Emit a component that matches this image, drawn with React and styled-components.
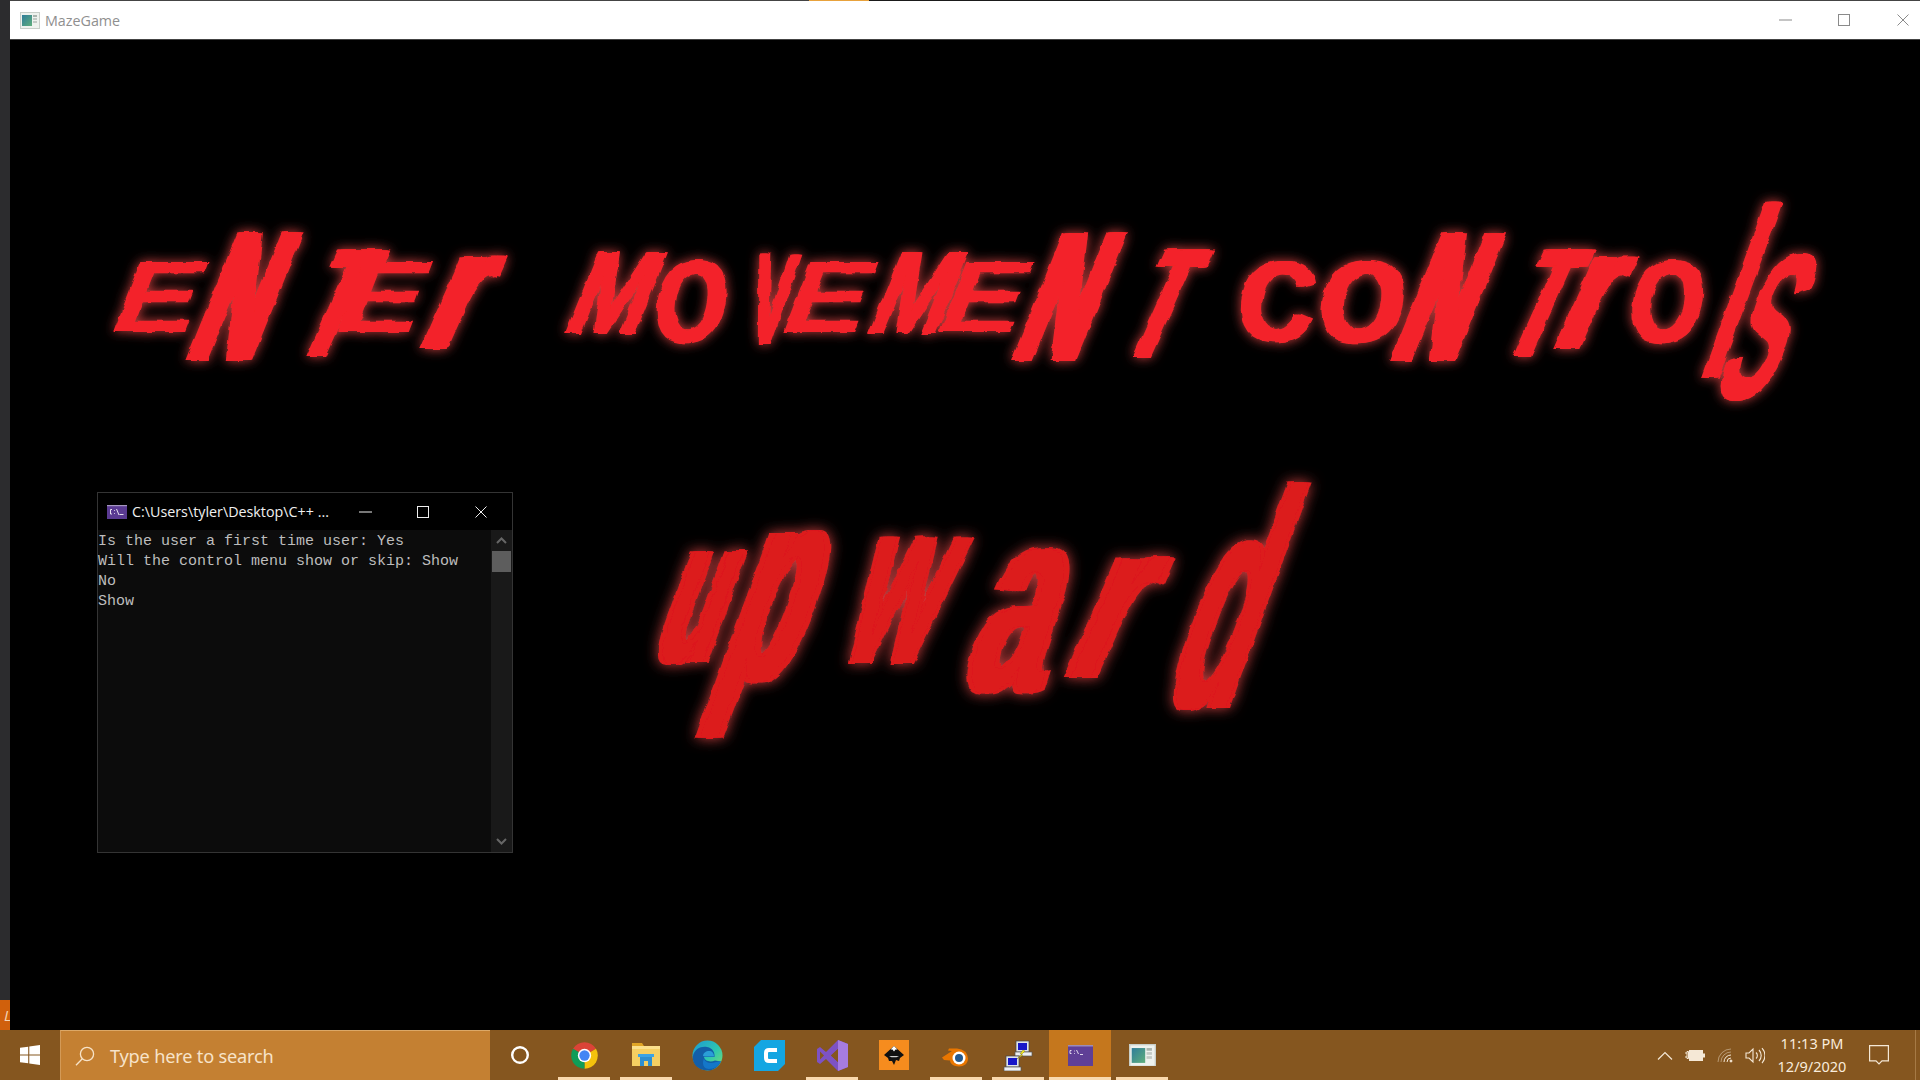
import React from "react";
import styled, { createGlobalStyle } from "styled-components";

const Global = createGlobalStyle`
  html, body { margin: 0; padding: 0; background: #000; overflow: hidden; }
  #root { width: 1920px; height: 1080px; }
`;

const Screen = styled.div`
  width: 1920px; height: 1080px;
  display: grid;
  grid-template-rows: 1030px 50px;
  font-family: "Open Sans", "Noto Sans", sans-serif;
`;
const Upper = styled.div`
  display: grid;
  grid-template-columns: 10px 1fr;
  min-height: 0;
`;
const DesktopEdge = styled.div`
  background: #2c2c2e;
  display: flex;
  flex-direction: column;
  justify-content: flex-end;
`;
const EdgeTab = styled.div`
  height: 30px;
  background: #d0600c;
  color: #f5d5b5;
  font-size: 15px;
  font-style: italic;
  line-height: 30px;
  padding-left: 4px;
  overflow: hidden;
`;
const GameWindow = styled.div`
  display: grid;
  grid-template-rows: 40px 1fr;
  min-width: 0;
`;
const TitleBar = styled.div`
  background: #fff;
  border-top: 1px solid #444;
  border-bottom: 1px solid #444;
  box-sizing: border-box;
  display: flex;
  align-items: center;
  padding-left: 10px;
  position: relative;
`;
const TopAccent = styled.div`
  position: absolute;
  top: -1px;
  left: ${p => p.$x}px;
  width: ${p => p.$w}px;
  height: 1px;
  background: ${p => p.$c};
`;
const TitleText = styled.span`
  margin-left: 5px;
  color: #8f8f8f;
  font-size: 14.3px;
  flex: 1;
`;
const Controls = styled.div`
  display: flex;
  height: 100%;
  margin-right: -12px;
`;
const CtlBtn = styled.div`
  width: 58.5px;
  display: flex;
  align-items: center;
  justify-content: center;
  color: #8a8a8a;
`;
const Canvas = styled.div`
  background: #000;
  position: relative;
  overflow: hidden;
`;

/* Big display lettering */
const Line = styled.div`
  position: absolute;
  left: ${p => p.$x}px;
  top: ${p => p.$y}px;
  display: flex;
  align-items: flex-start;
  color: ${p => p.$c};
  filter: url(#rough) drop-shadow(0 0 ${p => p.$g}px rgba(255, 20, 20, .8));
  font-family: "Liberation Sans", Arial, sans-serif;
  font-weight: 700;
`;
const Cell = styled.div`
  flex: none;
  display: flex;
  align-items: center;
  justify-content: center;
`;
const Glyph = styled.span`
  display: block;
  flex: none;
  white-space: pre;
`;

/* cap top, bottom, ink width (em) of each Liberation Sans Bold letter used */
const M = {
  E: [.716, 0, .46], N: [.716, 0, .48], T: [.716, 0, .47], M: [.716, 0, .58], O: [.73, -.012, .6],
  V: [.716, 0, .56], C: [.73, -.012, .54], S: [.73, -.012, .48], r: [.53, 0, .3], l: [.716, 0, .14],
  u: [.519, -.01, .42], p: [.53, -.21, .44], w: [.519, 0, .66], a: [.53, -.01, .42], d: [.729, -.01, .44],
};

function Letter({ c, ml, mt, w, h, skew, smear }) {
  const [top, bot, ink] = M[c];
  const fs = h / (top - bot);
  const shift = h * Math.tan(skew * Math.PI / 180);
  const body = Math.max(w - shift, 8);
  const sx = body / ((ink + 2 * smear) * fs);
  const dy = ((top + bot) / 2 - .3465) * fs;
  const s = smear * fs;
  const shadow = s ? [s, -s, s / 2, -s / 2].map(v => `${v.toFixed(1)}px 0 0 currentColor`).join(",") : "none";
  return (
    <Cell style={{ width: w, height: h, marginLeft: ml, marginTop: mt }}>
      <Glyph style={{
        fontSize: fs,
        lineHeight: `${fs}px`,
        textShadow: shadow,
        transform: `translateY(${dy.toFixed(1)}px) skewX(${-skew}deg) scaleX(${sx.toFixed(3)})`,
      }}>{c}</Glyph>
    </Cell>
  );
}

function Lettering({ items, y, color, glow, originX }) {
  let right = originX;
  return (
    <Line $x={originX - 10} $y={y - 40} $c={color} $g={glow}>
      {items.map(([c, x, x2, t, b, skew, smear], i) => {
        const ml = x - right;
        right = x2;
        return <Letter key={i} c={c} ml={ml} mt={t - y} w={x2 - x} h={b - t} skew={skew} smear={smear} />;
      })}
    </Line>
  );
}

const heading = [
  ["E", 117, 203, 260, 333, 21, 0],
  ["N", 190, 300, 228, 362, 22, .05],
  ["T", 293, 387, 245, 357, 24, .05],
  ["E", 340, 427, 260, 333, 21, 0],
  ["r", 423, 510, 258, 350, 24, .05],
  ["M", 570, 663, 250, 335, 22, .02],
  ["O", 656, 728, 256, 343, 8, .03],
  ["V", 745, 800, 250, 345, 10, .03],
  ["E", 787, 873, 260, 333, 21, 0],
  ["M", 873, 964, 250, 335, 22, .02],
  ["E", 943, 1029, 260, 333, 21, 0],
  ["N", 1015, 1124, 228, 362, 22, .05],
  ["T", 1120, 1212, 245, 357, 24, .05],
  ["C", 1242, 1313, 258, 343, 6, .03],
  ["O", 1321, 1404, 256, 343, 8, .03],
  ["N", 1394, 1503, 228, 362, 22, .05],
  ["T", 1499, 1592, 245, 357, 24, .05],
  ["r", 1556, 1641, 258, 350, 24, .05],
  ["O", 1631, 1704, 256, 343, 8, .03],
  ["l", 1700, 1781, 203, 377, 20, .05],
  ["S", 1712, 1825, 247, 402, 24, .02],
];
const answer = [
  ["u", 660, 752, 553, 665, 20, .05],
  ["p", 715, 856, 533, 740, 20, .05],
  ["w", 847, 975, 540, 665, 20, .03],
  ["a", 970, 1087, 550, 695, 18, .04],
  ["r", 1067, 1179, 558, 678, 24, .05],
  ["d", 1164, 1309, 482, 712, 20, .03],
];

/* Console window */
const Console = styled.div`
  position: absolute;
  left: 87px;
  top: 452px;
  width: 416px;
  height: 361px;
  box-sizing: border-box;
  border: 1px solid #343434;
  background: #000;
  display: grid;
  grid-template-rows: 37px 1fr;
`;
const ConsoleHead = styled.div`
  display: flex;
  align-items: center;
  padding-left: 9px;
  color: #f0f0f0;
  font-size: 14.3px;
`;
const ConsoleTitle = styled.span`
  margin-left: 5px;
  width: 204px;
  white-space: nowrap;
  flex: none;
`;
const ConsoleCtl = styled.div`
  width: 58px;
  display: flex;
  justify-content: center;
  align-items: center;
  flex: none;
`;
const ConsoleBody = styled.div`
  display: grid;
  grid-template-columns: 1fr 21px;
  min-height: 0;
`;
const Output = styled.pre`
  margin: 0;
  background: #0c0c0c;
  color: #bdbdbd;
  font: 15px/20px "Liberation Mono", monospace;
  padding-top: 2px;
`;
const Scroll = styled.div`
  background: #191919;
  display: grid;
  grid-template-rows: 21px 21px 1fr 21px;
  justify-items: center;
  align-items: center;
`;
const Thumb = styled.div`
  width: 19px;
  height: 21px;
  background: #5d5d5d;
`;

/* Taskbar */
const Taskbar = styled.div`
  background: #85561f;
  display: flex;
  align-items: stretch;
  height: 50px;
`;
const StartBtn = styled.div`
  width: 60px;
  display: flex;
  align-items: center;
  justify-content: center;
`;
const SearchBox = styled.div`
  width: 430px;
  background: #c48032;
  border-top: 1px solid #dca867;
  border-left: 1px solid #d39a57;
  box-sizing: border-box;
  display: flex;
  align-items: center;
  padding-left: 14px;
  color: #f7e3c9;
  font-size: 18.2px;
  font-family: "Noto Sans", sans-serif;
`;
const SearchLabel = styled.span`
  margin-left: 15px;
  letter-spacing: -.2px;
`;
const TaskBtn = styled.div`
  width: ${p => p.$w || 62}px;
  padding-right: ${p => p.$pr || 0}px;
  flex: none;
  box-sizing: border-box;
  display: flex;
  align-items: center;
  justify-content: center;
  position: relative;
  background: ${p => p.$active ? "#c5771d" : "transparent"};
`;
const Under = styled.div`
  position: absolute;
  bottom: 0;
  left: ${p => p.$l ?? 5}px;
  right: ${p => p.$r ?? 5}px;
  height: 3px;
  background: #f9d9ae;
`;
const Tray = styled.div`
  margin-left: auto;
  display: flex;
  align-items: center;
  color: #f5e8d6;
  height: 100%;
`;
const TrayIcon = styled.div`
  width: 30px;
  display: flex;
  align-items: center;
  justify-content: center;
`;
const Clock = styled.div`
  width: 72px;
  margin-left: 6px;
  text-align: center;
  font: 14.5px/23px "Noto Sans", sans-serif;
  color: #f9ecdc;
  white-space: nowrap;
`;
const Notify = styled.div`
  width: 62px;
  margin-right: 5px;
  display: flex;
  align-items: center;
  justify-content: center;
`;
const ShowDesk = styled.div`
  width: 5px;
  height: 100%;
  border-left: 1px solid #a67a45;
  box-sizing: border-box;
`;

const MazeIcon = ({ s = 20 }) => (
  <svg width={s} height={s * .85} viewBox="0 0 20 17">
    <defs>
      <linearGradient id="mz" x1="0" y1="0" x2="1" y2="1">
        <stop offset="0" stopColor="#2f7d9a" />
        <stop offset="1" stopColor="#5fae7c" />
      </linearGradient>
    </defs>
    <rect width="20" height="17" fill="#c8cfc9" />
    <rect x="1" y="1" width="18" height="15" fill="#eef2ee" />
    <rect x="2" y="3" width="10" height="11" fill="url(#mz)" />
    <rect x="13" y="3" width="4" height="2" fill="#aab4ae" />
    <rect x="13" y="6" width="4" height="2" fill="#c3cac5" />
    <rect x="13" y="9" width="4" height="2" fill="#c3cac5" />
  </svg>
);

const CmdIcon = () => (
  <svg width="20" height="14" viewBox="0 0 20 14" style={{ flex: "none" }}>
    <rect width="20" height="14" fill="#5a3a92" />
    <rect width="20" height="1.200" fill="#a596c0" />
    <path d="M5 4.500H3.500v4.500H5M7 5.500h.8M7 8.500h.8M9.500 4l2.500 6M12.500 9.500h4" stroke="#e6e0f0" strokeWidth="1" fill="none" />
  </svg>
);

const WinLogo = () => (
  <svg width="20" height="20" viewBox="0 0 20 20" fill="#fff">
    <path d="M0 2.800 8.200 1.700v7.700H0zM9.300 1.500 20 0v9.400H9.300zM0 10.500h8.200v7.800L0 17.200zM9.300 10.500H20V20L9.300 18.500z" />
  </svg>
);

const SearchGlyph = () => (
  <svg width="20" height="20" viewBox="0 0 20 20" fill="none" stroke="#f7e3c9" strokeWidth="1.300" style={{ flex: "none" }}>
    <circle cx="12" cy="8" r="6.600" />
    <path d="M7.300 12.700 1 19.300" />
  </svg>
);

const Chrome = () => (
  <svg width="29" height="29" viewBox="0 0 48 48">
    <path d="M24 24 4.950 13A22 22 0 0 1 43.050 13z" fill="#db4437" />
    <path d="M24 24 43.050 13A22 22 0 0 1 24 46z" fill="#f4c20d" />
    <path d="M24 24 24 46A22 22 0 0 1 4.950 13z" fill="#0f9d58" />
    <circle cx="24" cy="24" r="11" fill="#fff" />
    <circle cx="24" cy="24" r="8.500" fill="#4285f4" />
  </svg>
);
const Explorer = () => (
  <svg width="28" height="28" viewBox="0 0 28 28">
    <path d="M0 2h10l2 3H0z" fill="#e0a526" />
    <rect y="5" width="28" height="20" fill="#f5cf62" />
    <rect y="5" width="28" height="3" fill="#fbe08c" />
    <path d="M8 15h12v10h-4v-5h-4v5H8z" fill="#2e8fd0" />
    <rect x="6" y="13" width="16" height="3" fill="#3ba4e6" />
  </svg>
);
const Edge = () => (
  <svg width="31" height="31" viewBox="0 0 31 31">
    <defs>
      <linearGradient id="eg" x1="0" y1="0" x2="1" y2="1">
        <stop offset="0" stopColor="#1a98d5" />
        <stop offset=".55" stopColor="#2ec6b0" />
        <stop offset="1" stopColor="#7fe06a" />
      </linearGradient>
    </defs>
    <circle cx="15.500" cy="15.500" r="15" fill="url(#eg)" />
    <path d="M.8 17C2 8 10 6 15 7c6 1 8 6 7.500 10H12c.500 4 6 5.500 11 3.500l6 1C26 28 20 31 15 30.500 6 30 .500 24 .8 17z" fill="#125ea8" />
    <path d="M11 16c0-3 3-5 6-5s5 2 5 5.500H16c-2 0-4 0-5-.500z" fill="#2a9ed8" />
    <path d="M12 18.500c1 4 6 6 12 3.500l5-1c-2 5-7 8-12 8-4 0-6-3-6-6 0-2 .500-3.500 1-4.500z" fill="#1477c9" />
  </svg>
);
const CApp = () => (
  <svg width="31" height="31" viewBox="0 0 31 31">
    <path d="M7 0h24v24l-7 7H0V7z" fill="#14a6e2" />
    <path d="M23 10h-8q-3 0-3 3v5q0 3 3 3h8" stroke="#fff" strokeWidth="4" fill="none" />
  </svg>
);
const VS = () => (
  <svg width="31" height="31" viewBox="0 0 31 31">
    <path d="M21 0l10 4v23l-10 4-12-12-6 5-3-2V9l3-2 6 5zM21 9l-7 6.500 7 6.500zM3 11.500v8l4-4z" fill="#7d52c4" fillRule="evenodd" />
    <path d="M21 0l10 4v23l-10 4z" fill="#a67ce0" />
    <path d="M21 9l-7 6.500 7 6.500z" fill="#85561f" />
  </svg>
);
const Inkscape = () => (
  <svg width="30" height="30" viewBox="0 0 30 30">
    <rect width="30" height="30" fill="#f68c1e" />
    <path d="M15 6 25 15 21 18 20 21 17 20 15 25 13 21 10 21 9 18 5 15z" fill="#111" />
    <path d="M15 6 18.500 9.500 16.500 9.500 15 11.500 13.500 9.500 11.500 9.500z" fill="#fff" />
    <path d="M10 16h10l-2.500 1.300h-5z" fill="#cfcfcf" />
  </svg>
);
const Blender = () => (
  <svg width="28" height="24" viewBox="0 0 28 24">
    <path d="M1 14.500 11 8 7 7.500 8 5.500h8q10 1 11 10c0 5-4 8-9 8-5 0-9-3-9-6L3 17z" fill="#ea7600" />
    <circle cx="18" cy="15" r="6.500" fill="#fff" />
    <circle cx="18" cy="15" r="4" fill="#24598f" />
  </svg>
);
const NetIcon = () => (
  <svg width="30" height="31" viewBox="0 0 30 31">
    <rect x="13" y="1" width="13" height="11" fill="#dfe3e8" stroke="#444" strokeWidth=".7" />
    <rect x="15" y="3" width="9" height="7" fill="#1616c8" />
    <rect x="12" y="12" width="17" height="4" fill="#eef0f2" stroke="#555" strokeWidth=".7" />
    <rect x="3" y="16" width="13" height="11" fill="#dfe3e8" stroke="#444" strokeWidth=".7" />
    <rect x="5" y="18" width="9" height="7" fill="#1616c8" />
    <rect x="1" y="27" width="17" height="4" fill="#eef0f2" stroke="#555" strokeWidth=".7" />
    <path d="M20 10l-3 4 2 0-5 5 6-4-2 0 4-4z" fill="#f6ee20" stroke="#7a6c10" strokeWidth=".4" />
  </svg>
);
const TaskCmd = () => (
  <svg width="25" height="21" viewBox="0 0 25 21">
    <rect width="25" height="21" fill="#5f3f96" />
    <rect width="25" height="1.500" fill="#9d8cb8" />
    <path d="M3.500 5.500h-1.500v3h1.500M6 6h.8M6 8.500h.8M8.500 5l2 4M12 9.500h3" stroke="#efeaf6" strokeWidth=".9" fill="none" />
  </svg>
);

const Minus = ({ c = "currentColor" }) => (
  <svg width="13" height="2" viewBox="0 0 13 2"><path d="M0 1h13" stroke={c} strokeWidth="1" /></svg>
);
const Square = ({ c = "currentColor" }) => (
  <svg width="12" height="12" viewBox="0 0 12 12"><rect x=".5" y=".5" width="11" height="11" fill="none" stroke={c} /></svg>
);
const Cross = ({ c = "currentColor" }) => (
  <svg width="12" height="12" viewBox="0 0 12 12"><path d="M.5.500l11 11M11.500.500l-11 11" stroke={c} /></svg>
);

export default function App() {
  return (
    <Screen>
      <Global />
      <svg width="0" height="0" style={{ position: "absolute" }}>
        <filter id="rough" x="-20%" y="-30%" width="140%" height="160%">
          <feTurbulence type="fractalNoise" baseFrequency="0.08" numOctaves="2" seed="4" />
          <feDisplacementMap in="SourceGraphic" scale="5" xChannelSelector="R" yChannelSelector="G" />
        </filter>
      </svg>
      <Upper>
        <DesktopEdge><EdgeTab>L</EdgeTab></DesktopEdge>
        <GameWindow>
          <TitleBar>
            <TopAccent $x={799} $w={60} $c="#e8a23c" />
            <TopAccent $x={859} $w={241} $c="#1a1a1a" />
            <MazeIcon />
            <TitleText>MazeGame</TitleText>
            <Controls>
              <CtlBtn><Minus /></CtlBtn>
              <CtlBtn><Square /></CtlBtn>
              <CtlBtn><Cross /></CtlBtn>
            </Controls>
          </TitleBar>
          <Canvas>
            <Lettering items={heading} y={200} color="#f3242a" glow={6} originX={117} />
            <Lettering items={answer} y={480} color="#dc1a1e" glow={7} originX={660} />
            <Console>
              <ConsoleHead>
                <CmdIcon />
                <ConsoleTitle>C:\Users\tyler\Desktop\C++ ...</ConsoleTitle>
                <ConsoleCtl><Minus c="#eee" /></ConsoleCtl>
                <ConsoleCtl><Square c="#eee" /></ConsoleCtl>
                <ConsoleCtl><Cross c="#eee" /></ConsoleCtl>
              </ConsoleHead>
              <ConsoleBody>
                <Output>{"Is the user a first time user: Yes\nWill the control menu show or skip: Show\nNo\nShow"}</Output>
                <Scroll>
                  <svg width="11" height="7" viewBox="0 0 11 7"><path d="M1 6l4.500-4.500L10 6" stroke="#666" strokeWidth="2" fill="none" /></svg>
                  <Thumb />
                  <span />
                  <svg width="11" height="7" viewBox="0 0 11 7"><path d="M1 1l4.500 4.500L10 1" stroke="#666" strokeWidth="2" fill="none" /></svg>
                </Scroll>
              </ConsoleBody>
            </Console>
          </Canvas>
        </GameWindow>
      </Upper>
      <Taskbar>
        <StartBtn><WinLogo /></StartBtn>
        <SearchBox><SearchGlyph /><SearchLabel>Type here to search</SearchLabel></SearchBox>
        <TaskBtn $w={63} $pr={3}>
          <svg width="20" height="20" viewBox="0 0 20 20"><circle cx="10" cy="10" r="7.800" fill="none" stroke="#fff" strokeWidth="2.400" /></svg>
        </TaskBtn>
        <TaskBtn><Chrome /><Under /></TaskBtn>
        <TaskBtn><Explorer /><Under /></TaskBtn>
        <TaskBtn $pr={1}><Edge /></TaskBtn>
        <TaskBtn $pr={1}><CApp /></TaskBtn>
        <TaskBtn><VS /><Under /></TaskBtn>
        <TaskBtn><Inkscape /></TaskBtn>
        <TaskBtn $pr={2}><Blender /><Under /></TaskBtn>
        <TaskBtn><NetIcon /><Under /></TaskBtn>
        <TaskBtn $active><TaskCmd /><Under $l={0} $r={0} /></TaskBtn>
        <TaskBtn><MazeIcon s={27} /><Under /></TaskBtn>
        <Tray>
          <TrayIcon>
            <svg width="16" height="9" viewBox="0 0 16 9"><path d="M1 8.500l7-7 7 7" fill="none" stroke="currentColor" strokeWidth="1.200" /></svg>
          </TrayIcon>
          <TrayIcon>
            <svg width="20" height="13" viewBox="0 0 20 13"><path d="M0 4h2M0 8h2M2 2.500h1.500v7H2z" stroke="currentColor" fill="none" /><rect x="4.500" y="1.500" width="13" height="10" fill="currentColor" stroke="currentColor" /><rect x="18" y="4.500" width="2" height="4" fill="currentColor" /></svg>
          </TrayIcon>
          <TrayIcon>
            <svg width="17" height="15" viewBox="0 0 17 15" fill="none" stroke="currentColor" strokeWidth="1">
              <path d="M1 14A13 13 0 0 1 14 1" opacity=".45" /><path d="M4 14A10 10 0 0 1 14 4" opacity=".45" /><path d="M7 14A7 7 0 0 1 14 7" /><path d="M10 14A4 4 0 0 1 14 10" /><circle cx="14" cy="13" r="1" fill="currentColor" />
            </svg>
          </TrayIcon>
          <TrayIcon>
            <svg width="20" height="17" viewBox="0 0 20 17" fill="none" stroke="currentColor" strokeWidth="1.100">
              <path d="M1 6h3l4-4v13l-4-4H1z" /><path d="M11 5.500a4 4 0 0 1 0 6M14 3a8 8 0 0 1 0 11M17 1a11 11 0 0 1 0 15" />
            </svg>
          </TrayIcon>
          <Clock>11:13 PM<br />12/9/2020</Clock>
          <Notify>
            <svg width="20" height="20" viewBox="0 0 20 20" fill="none" stroke="currentColor" strokeWidth="1.200"><path d="M.6.600h18.800v15.200h-6.400l-3 3-3-3H.6z" /></svg>
          </Notify>
          <ShowDesk />
        </Tray>
      </Taskbar>
    </Screen>
  );
}
